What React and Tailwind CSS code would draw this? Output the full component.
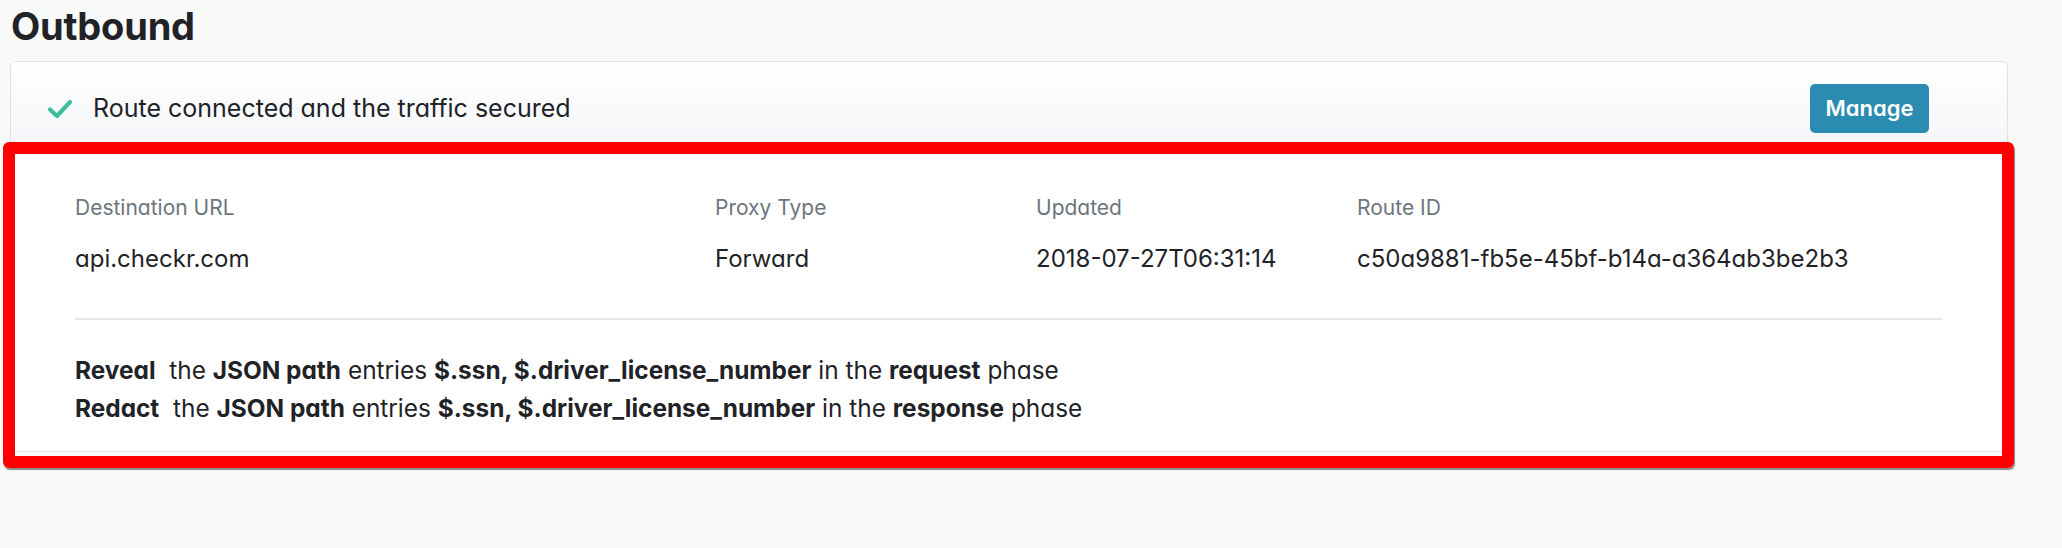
import React from "react";

const font = { fontFamily: "Inter, Lato, 'Noto Sans', sans-serif" };

function Check() {
  return (
    <svg width="26" height="20" viewBox="0 0 26 20" fill="none">
      <path d="M3 10.5 L10 17 L23 3" stroke="#3dbf9d" strokeWidth="4.2" strokeLinecap="round" strokeLinejoin="round" />
    </svg>
  );
}

export default function App() {
  return (
    <div
      className="relative w-[2062px] h-[548px] bg-[#f8f9f9] text-[#1f2328] overflow-hidden [font-feature-settings:'cv11']"
      style={font}
    >
      <h1 className="pl-[11px] pt-[7px] text-[38px] leading-none font-bold tracking-[-0.2px] text-[#1f2328]">
        Outbound
      </h1>

      <div className="ml-[10px] mt-[16px] w-[1998px] rounded-[6px] border-[1.5px] border-[#dfe1e3] bg-white overflow-hidden">
        <div className="flex h-[93px] items-center bg-gradient-to-b from-white to-[#f3f5f8] pl-[36px] pr-[78px]">
          <Check />
          <span className="ml-[20px] text-[25px] leading-none text-[#1f2328]">
            Route connected and the traffic secured
          </span>
          <button className="ml-auto h-[49px] w-[119px] rounded-[5px] bg-[#2a8cb0] text-[22px] font-semibold text-white">
            Manage
          </button>
        </div>

        <div className="px-[64px] pt-[40px] pb-[24px]">
          <div className="grid grid-cols-[640px_321px_321px_1fr]">
            {[
              ["Destination URL", "api.checkr.com"],
              ["Proxy Type", "Forward"],
              ["Updated", "2018-07-27T06:31:14"],
              ["Route ID", "c50a9881-fb5e-45bf-b14a-a364ab3be2b3"],
            ].map(([label, value]) => (
              <div key={label} className="flex flex-col">
                <span className="text-[21px] leading-[26px] text-[#6c757d]">{label}</span>
                <span className="mt-[23px] text-[24px] leading-[30px] text-[#1f2328]">{value}</span>
              </div>
            ))}
          </div>

          <div className="mt-[44px] h-[2px] bg-[#e6e7e8]" />

          <div className="mt-[31px] text-[24.4px] leading-[38px] text-[#1f2328]">
            <p>
              <b className="font-bold">Reveal</b>&nbsp; the <b className="font-bold">JSON path</b> entries{" "}
              <b className="font-bold">$.ssn, $.driver_license_number</b> in the{" "}
              <b className="font-bold">request</b> phase
            </p>
            <p>
              <b className="font-bold">Redact</b>&nbsp; the <b className="font-bold">JSON path</b> entries{" "}
              <b className="font-bold">$.ssn, $.driver_license_number</b> in the{" "}
              <b className="font-bold">response</b> phase
            </p>
          </div>
        </div>
      </div>

      <div className="pointer-events-none absolute left-[3px] top-[142px] h-[326px] w-[2011px] rounded-[6px] border-[12px] border-[#ff0000] shadow-[1px_2px_1px_rgba(0,0,0,0.45)]" />
    </div>
  );
}
